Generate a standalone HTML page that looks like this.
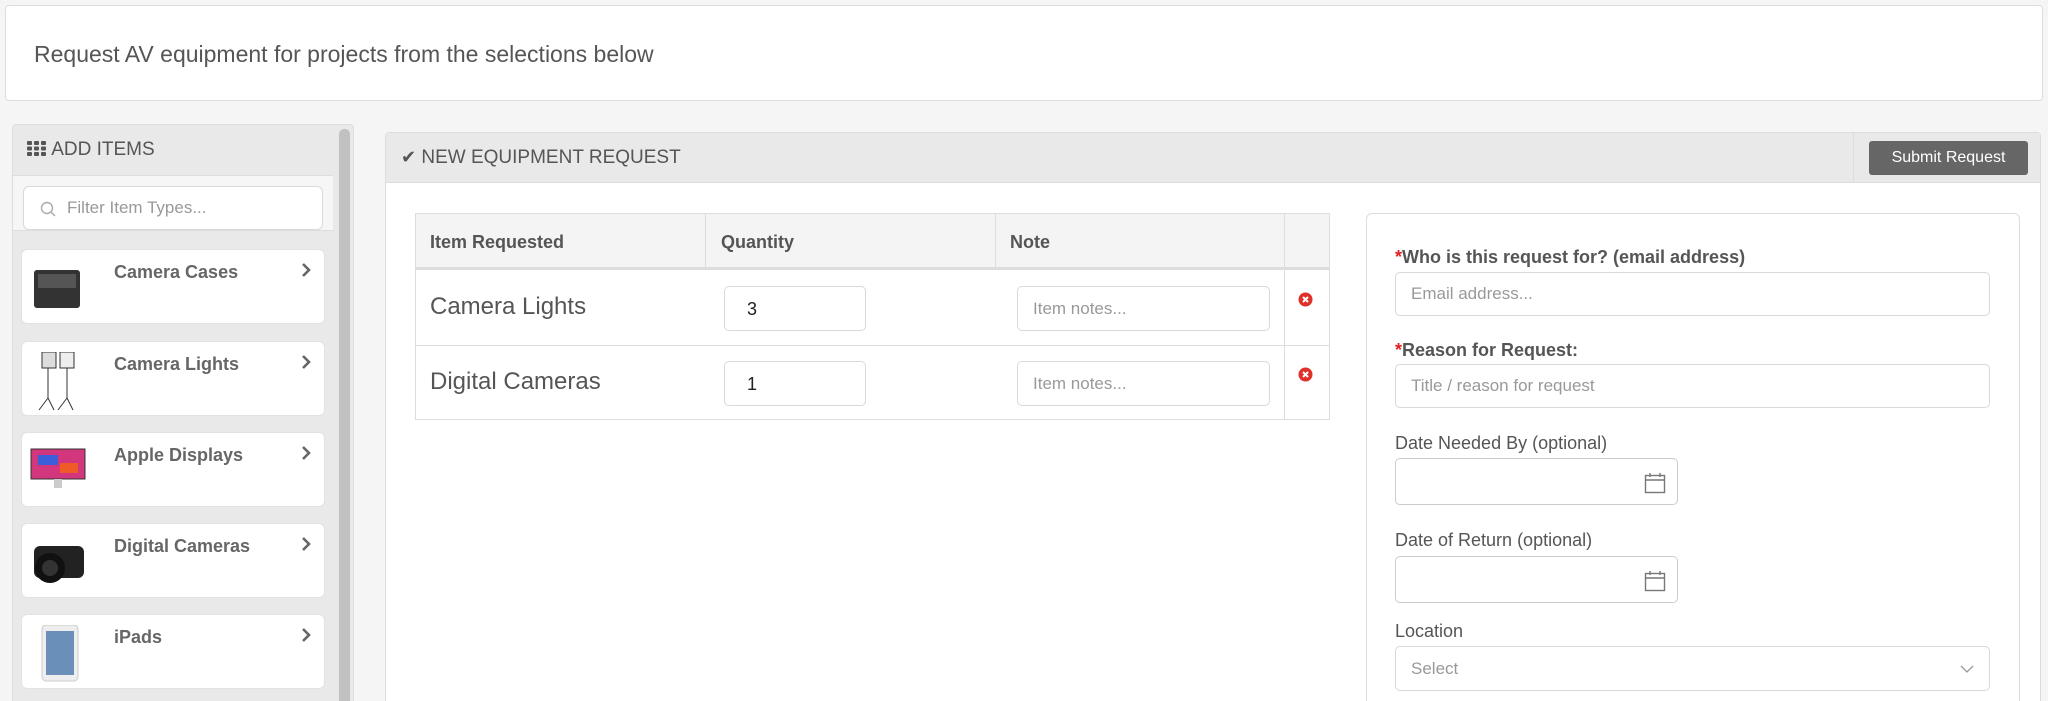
<!DOCTYPE html>
<html style="height:701px;overflow:hidden"><head><meta charset="utf-8"><style>
*{box-sizing:border-box;margin:0;padding:0}
html,body{width:2048px;height:701px;overflow:hidden}
body{background:#f5f5f5;font-family:"Liberation Sans",Arial,sans-serif;color:#555;position:relative}
.a{position:absolute}
.card{position:absolute;left:21px;width:304px;height:75px;background:#fff;border-radius:6px;border:1px solid #e2e2e2}
.card b{position:absolute;left:92px;top:12px;font-size:18px;color:#666}
.card .chev{position:absolute;right:12px;top:12px;}
.card .img{position:absolute;left:8px;top:10px;width:56px;height:56px}
.inp{position:absolute;background:#fff;border:1px solid #d9d9d9;border-radius:5px}
.lbl{position:absolute;left:1395px;font-size:18px;color:#555}
.req{font-weight:bold}
.req i{color:#e02020;font-style:normal}
.ph{color:#999;font-size:17px;position:absolute;left:15px;top:50%;transform:translateY(-50%)}
</style></head><body>
<div class="a" style="left:5px;top:5px;width:2038px;height:96px;background:#fff;border:1px solid #ddd;border-radius:4px"></div>
<div class="a" style="left:34px;top:41px;font-size:23px;color:#555">Request AV equipment for projects from the selections below</div>

<div class="a" style="left:12px;top:124px;width:342px;height:600px;background:#e9e9e9;border:1px solid #ddd;border-radius:4px"></div>
<div class="a" style="left:13px;top:175px;width:320px;height:56px;background:#f6f6f7;border-top:1px solid #ddd;border-bottom:1px solid #ddd"></div>
<div class="a" style="left:339px;top:129px;width:11px;height:580px;background:#c1c1c1;border-radius:5px"></div>
<div class="a" style="left:27px;top:139px;font-size:19px;color:#555">
<svg width="20" height="15" viewBox="0 0 20 15" style="vertical-align:-1px"><g fill="#555"><rect x="0" y="0" width="5" height="4" rx="1"/><rect x="7" y="0" width="5" height="4" rx="1"/><rect x="14" y="0" width="5" height="4" rx="1"/><rect x="0" y="5.5" width="5" height="4" rx="1"/><rect x="7" y="5.5" width="5" height="4" rx="1"/><rect x="14" y="5.5" width="5" height="4" rx="1"/><rect x="0" y="11" width="5" height="4" rx="1"/><rect x="7" y="11" width="5" height="4" rx="1"/><rect x="14" y="11" width="5" height="4" rx="1"/></g></svg> ADD ITEMS</div>
<div class="inp" style="left:23px;top:186px;width:300px;height:44px;border-radius:6px">
<svg class="a" style="left:16px;top:14px" width="16" height="16" viewBox="0 0 16 16"><circle cx="7" cy="7" r="5.5" fill="none" stroke="#aaa" stroke-width="1.4"/><path d="M11 11l4 4" stroke="#aaa" stroke-width="1.4"/></svg>
<span class="ph" style="left:43px">Filter Item Types...</span></div>

<div class="card" style="top:249px"><div class="img"><svg width="56" height="56"><rect x="4" y="10" width="46" height="38" rx="3" fill="#333"/><rect x="8" y="14" width="38" height="14" fill="#555"/></svg></div><b>Camera Cases</b><svg class="chev" width="12" height="16"><path d="M3 2l6 6-6 6" stroke="#666" stroke-width="2.6" fill="none"/></svg></div>
<div class="card" style="top:341px"><div class="img"><svg width="56" height="60"><rect x="12" y="0" width="14" height="16" fill="#ddd" stroke="#333"/><rect x="30" y="0" width="14" height="16" fill="#eee" stroke="#333"/><path d="M18 16v30l-9 12M18 46l6 12M37 16v30l-9 12M37 46l6 12" stroke="#333" fill="none"/></svg></div><b>Camera Lights</b><svg class="chev" width="12" height="16"><path d="M3 2l6 6-6 6" stroke="#666" stroke-width="2.6" fill="none"/></svg></div>
<div class="card" style="top:432px"><div class="img"><svg width="56" height="56"><rect x="1" y="6" width="54" height="30" fill="#d2367c" stroke="#333"/><rect x="8" y="12" width="20" height="10" fill="#3a5fd8"/><rect x="30" y="20" width="18" height="10" fill="#f05a28"/><rect x="24" y="36" width="8" height="9" fill="#ccc"/></svg></div><b>Apple Displays</b><svg class="chev" width="12" height="16"><path d="M3 2l6 6-6 6" stroke="#666" stroke-width="2.6" fill="none"/></svg></div>
<div class="card" style="top:523px"><div class="img"><svg width="56" height="56"><rect x="4" y="12" width="50" height="32" rx="6" fill="#222"/><circle cx="20" cy="34" r="15" fill="#111"/><circle cx="20" cy="34" r="8" fill="#333"/></svg></div><b>Digital Cameras</b><svg class="chev" width="12" height="16"><path d="M3 2l6 6-6 6" stroke="#666" stroke-width="2.6" fill="none"/></svg></div>
<div class="card" style="top:614px"><div class="img"><svg width="56" height="60"><rect x="12" y="0" width="36" height="56" rx="4" fill="#eee" stroke="#ccc"/><rect x="16" y="6" width="28" height="44" fill="#6a8fb8"/></svg></div><b>iPads</b><svg class="chev" width="12" height="16"><path d="M3 2l6 6-6 6" stroke="#666" stroke-width="2.6" fill="none"/></svg></div>

<div class="a" style="left:385px;top:132px;width:1656px;height:600px;background:#fff;border:1px solid #ddd;border-radius:4px"></div>
<div class="a" style="left:386px;top:133px;width:1654px;height:50px;background:#e9e9e9;border-bottom:1px solid #ddd"></div>
<div class="a" style="left:1853px;top:133px;width:1px;height:50px;background:#ddd"></div>
<div class="a" style="left:401px;top:147px;font-size:19px;color:#555"><span style="font-size:18px">✔</span> NEW EQUIPMENT REQUEST</div>
<div class="a" style="left:1869px;top:141px;width:159px;height:34px;background:#666;border-radius:3px;color:#fff;font-size:16px;text-align:center;line-height:34px">Submit Request</div>

<div class="a" style="left:415px;top:213px;width:915px;height:207px;border:1px solid #ddd"></div>
<div class="a" style="left:416px;top:214px;width:913px;height:56px;background:#f4f4f4;border-bottom:3px solid #ddd"></div>
<div class="a" style="left:705px;top:214px;width:1px;height:56px;background:#ddd"></div>
<div class="a" style="left:995px;top:214px;width:1px;height:56px;background:#ddd"></div>
<div class="a" style="left:1284px;top:214px;width:1px;height:205px;background:#ddd"></div>
<div class="a" style="left:416px;top:345px;width:913px;height:1px;background:#ddd"></div>
<div class="a" style="left:430px;top:232px;font-size:18px;font-weight:bold;color:#555">Item Requested</div>
<div class="a" style="left:721px;top:232px;font-size:18px;font-weight:bold;color:#555">Quantity</div>
<div class="a" style="left:1010px;top:232px;font-size:18px;font-weight:bold;color:#555">Note</div>
<div class="a" style="left:430px;top:293px;font-size:24px;color:#555">Camera Lights</div>
<div class="a" style="left:430px;top:368px;font-size:24px;color:#555">Digital Cameras</div>
<div class="inp" style="left:724px;top:286px;width:142px;height:45px"><span class="a" style="left:22px;top:12px;font-size:18px;color:#222">3</span></div>
<div class="inp" style="left:724px;top:361px;width:142px;height:45px"><span class="a" style="left:22px;top:12px;font-size:18px;color:#222">1</span></div>
<div class="inp" style="left:1017px;top:286px;width:253px;height:45px"><span class="ph">Item notes...</span></div>
<div class="inp" style="left:1017px;top:361px;width:253px;height:45px"><span class="ph">Item notes...</span></div>
<svg class="a" style="left:1298px;top:292px" width="15" height="15"><circle cx="7.5" cy="7.5" r="7" fill="#e0302a"/><path d="M5 5l5 5M10 5l-5 5" stroke="#fff" stroke-width="2"/></svg>
<svg class="a" style="left:1298px;top:367px" width="15" height="15"><circle cx="7.5" cy="7.5" r="7" fill="#e0302a"/><path d="M5 5l5 5M10 5l-5 5" stroke="#fff" stroke-width="2"/></svg>

<div class="a" style="left:1366px;top:213px;width:654px;height:520px;border:1px solid #ddd;border-radius:6px;background:#fff"></div>
<div class="lbl req" style="top:247px"><i>*</i>Who is this request for? (email address)</div>
<div class="inp" style="left:1395px;top:272px;width:595px;height:44px"><span class="ph">Email address...</span></div>
<div class="lbl req" style="top:340px"><i>*</i>Reason for Request:</div>
<div class="inp" style="left:1395px;top:364px;width:595px;height:44px"><span class="ph">Title / reason for request</span></div>
<div class="lbl" style="top:433px">Date Needed By (optional)</div>
<div class="inp" style="left:1395px;top:458px;width:283px;height:47px;border:1.5px solid #ccc"><svg class="a" style="left:248px;top:13px" width="22" height="22"><rect x="1.5" y="3.5" width="19" height="17" fill="none" stroke="#777" stroke-width="1.4"/><path d="M1.5 8h19M6 1v4M16 1v4" stroke="#777" stroke-width="1.4"/></svg></div>
<div class="lbl" style="top:530px">Date of Return (optional)</div>
<div class="inp" style="left:1395px;top:556px;width:283px;height:47px;border:1.5px solid #ccc"><svg class="a" style="left:248px;top:13px" width="22" height="22"><rect x="1.5" y="3.5" width="19" height="17" fill="none" stroke="#777" stroke-width="1.4"/><path d="M1.5 8h19M6 1v4M16 1v4" stroke="#777" stroke-width="1.4"/></svg></div>
<div class="lbl" style="top:621px">Location</div>
<div class="inp" style="left:1395px;top:646px;width:595px;height:45px"><span class="ph">Select</span><svg class="a" style="left:564px;top:17px" width="14" height="10"><path d="M1 2l6 6 6-6" stroke="#999" stroke-width="1.3" fill="none"/></svg></div>
</body></html>
